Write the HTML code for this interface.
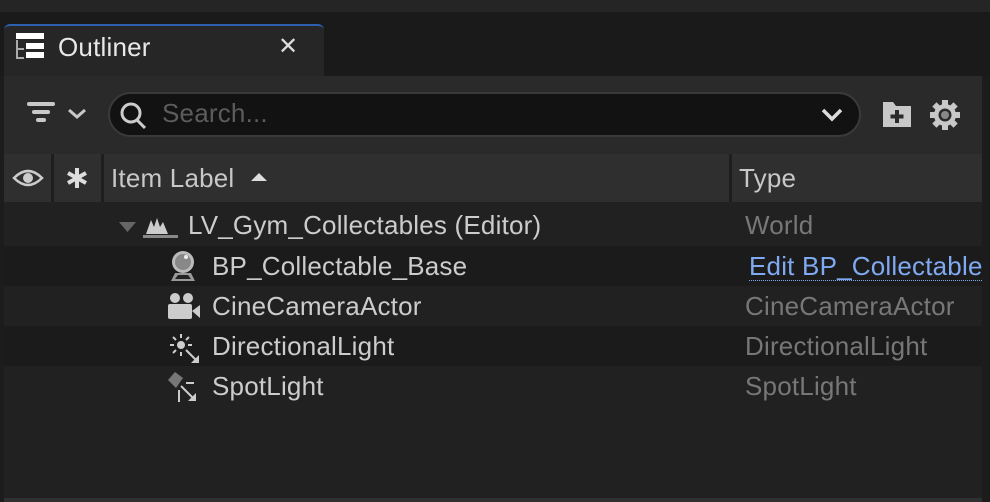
<!DOCTYPE html>
<html><head><style>
*{margin:0;padding:0;box-sizing:border-box}
body{width:990px;height:502px;background:#1c1c1c;font-family:"Liberation Sans",sans-serif;position:relative;overflow:hidden}
.a{position:absolute}
.t{font-size:26px;white-space:nowrap;position:absolute;letter-spacing:0.2px}
</style></head><body>
<div class="a" style="left:0;top:0;width:990px;height:12px;background:#252525"></div>
<div class="a" style="left:0;top:12px;width:990px;height:64px;background:#1a1a1a"></div>
<div class="a" style="left:4px;top:24px;width:320px;height:52px;background:#262626;border-radius:6px 6px 0 0;border-top:2px solid #2c5fae"></div>
<svg class="a" style="left:14px;top:32px" width="32" height="30"><rect x="2" y="1" width="28" height="6" fill="#fff"/><rect x="12" y="11" width="18" height="6" fill="#fff"/><rect x="12" y="20" width="18" height="6" fill="#fff"/><path d="M3 8V26H10M3 17H10" stroke="#aaa" stroke-width="2" fill="none"/></svg>
<div class="t" style="left:58px;top:32px;color:#e8e8e8">Outliner</div>
<div class="t" style="left:278px;top:32px;color:#ddd;font-size:24px">✕</div>
<div class="a" style="left:4px;top:76px;width:978px;height:78px;background:#2a2a2a"></div>
<svg class="a" style="left:26px;top:100px" width="64" height="28"><rect x="1" y="2" width="28" height="4" rx="2" fill="#c8c8c8"/><rect x="6" y="10" width="18" height="4" rx="2" fill="#c8c8c8"/><rect x="10" y="18" width="10" height="4" rx="2" fill="#c8c8c8"/><path d="M43 10L51 17L59 10" stroke="#c8c8c8" stroke-width="3" fill="none"/></svg>
<div class="a" style="left:108px;top:92px;width:753px;height:45px;background:#121212;border:2px solid #3a3a3a;border-radius:23px"></div>
<svg class="a" style="left:118px;top:100px" width="32" height="30"><circle cx="13" cy="13" r="9" stroke="#ccc" stroke-width="3" fill="none"/><path d="M19 20L27 28" stroke="#ccc" stroke-width="3"/></svg>
<div class="t" style="left:162px;top:98px;color:#5c5c5c">Search...</div>
<svg class="a" style="left:820px;top:106px" width="26" height="18"><path d="M3 4L12 13L21 4" stroke="#ddd" stroke-width="3.5" fill="none"/></svg>
<svg class="a" style="left:880px;top:99px" width="34" height="30"><path d="M3 3H13L16 7H31V28H3Z" fill="#c8c8c8"/><path d="M17 11V24M10.5 17.5H23.5" stroke="#2a2a2a" stroke-width="4"/></svg>
<svg class="a" style="left:928px;top:98px" width="34" height="34"><g fill="#c8c8c8" transform="translate(17 17)"><rect x="-3" y="-15" width="6" height="30"/><rect x="-3" y="-15" width="6" height="30" transform="rotate(45)"/><rect x="-3" y="-15" width="6" height="30" transform="rotate(90)"/><rect x="-3" y="-15" width="6" height="30" transform="rotate(135)"/><circle r="11"/></g><circle cx="17" cy="17" r="6.5" fill="#2a2a2a"/><circle cx="17" cy="17" r="4" fill="#888"/></svg>
<div class="a" style="left:4px;top:154px;width:978px;height:48px;background:#2f2f2f"></div>
<div class="a" style="left:51px;top:154px;width:3px;height:48px;background:#1e1e1e"></div>
<div class="a" style="left:101px;top:154px;width:3px;height:48px;background:#1e1e1e"></div>
<div class="a" style="left:729px;top:154px;width:3px;height:48px;background:#1e1e1e"></div>
<svg class="a" style="left:12px;top:166px" width="32" height="24"><path d="M2 12Q16 -2 30 12Q16 26 2 12Z" stroke="#ccc" stroke-width="2.5" fill="none"/><circle cx="16" cy="12" r="5" fill="#ccc"/></svg>
<svg class="a" style="left:66px;top:167px" width="22" height="22"><g stroke="#ddd" stroke-width="4"><path d="M11 1V21M2 6L20 16M2 16L20 6"/></g></svg>
<div class="t" style="left:111px;top:163px;color:#c8c8c8">Item Label</div>
<svg class="a" style="left:250px;top:172px" width="18" height="10"><path d="M1 9L9 1L17 9Z" fill="#ddd"/></svg>
<div class="t" style="left:739px;top:163px;color:#c8c8c8">Type</div>
<div class="a" style="left:4px;top:202px;width:978px;height:300px;background:#212121"></div>
<div class="a" style="left:4px;top:246px;width:978px;height:40px;background:#1b1b1b"></div>
<div class="a" style="left:4px;top:326px;width:978px;height:40px;background:#1b1b1b"></div>
<div class="a" style="left:4px;top:498px;width:978px;height:4px;background:#303030"></div>
<svg class="a" style="left:118px;top:214px" width="60" height="26"><path d="M1 8H18L9.5 18Z" fill="#666"/><path d="M28 20L33 6L36 13L39 4L42 13L45 8L50 20Z" fill="#ccc"/><rect x="25" y="21" width="51" height="3" fill="#888"/></svg>
<div class="t" style="left:188px;top:210px;color:#ccc">LV_Gym_Collectables (Editor)</div>
<div class="t" style="left:745px;top:210px;color:#777">World</div>
<svg class="a" style="left:166px;top:249px" width="34" height="34"><circle cx="17" cy="13" r="11" fill="#bbb"/><circle cx="17" cy="13" r="8" fill="#888"/><circle cx="20" cy="8" r="2" fill="#eee"/><path d="M5 32L9 24H25L29 32Z" fill="#999"/><path d="M9 30H25L22 26H12Z" fill="#222"/></svg>
<div class="t" style="left:212px;top:251px;color:#ccc">BP_Collectable_Base</div>
<div class="t" style="left:749px;top:251px;color:#7fa9f0">Edit BP_Collectable</div>
<div class="a" style="left:749px;top:280px;width:233px;border-top:1px dotted #7fa9f0"></div>
<svg class="a" style="left:166px;top:292px" width="36" height="28"><circle cx="9" cy="6" r="5" fill="#ccc"/><circle cx="22" cy="6" r="5" fill="#ccc"/><rect x="2" y="12" width="24" height="15" rx="2" fill="#ccc"/><path d="M26 19L34 13V26Z" fill="#ccc"/></svg>
<div class="t" style="left:212px;top:291px;color:#ccc">CineCameraActor</div>
<div class="t" style="left:745px;top:291px;color:#777">CineCameraActor</div>
<svg class="a" style="left:166px;top:330px" width="36" height="34"><circle cx="15" cy="15" r="4" fill="#ccc"/><g stroke="#ccc" stroke-width="2"><path d="M15 4V8M15 22V26M4 15H8M22 15H26M7 7L10 10M20 20L23 23M7 23L10 20M23 7L20 10"/></g><path d="M22 22L31 31" stroke="#ccc" stroke-width="2"/><path d="M33 33L33 25L25 33Z" fill="#ccc"/></svg>
<div class="t" style="left:212px;top:331px;color:#ccc">DirectionalLight</div>
<div class="t" style="left:745px;top:331px;color:#777">DirectionalLight</div>
<svg class="a" style="left:166px;top:370px" width="36" height="34"><path d="M2 10L9 2L17 8L10 18Z" fill="#777"/><path d="M20 13H28" stroke="#ccc" stroke-width="2"/><path d="M15 16L27 28M13 20V32" stroke="#ccc" stroke-width="2"/><path d="M30 31V23L22 31Z" fill="#ccc"/></svg>
<div class="t" style="left:212px;top:371px;color:#ccc">SpotLight</div>
<div class="t" style="left:745px;top:371px;color:#777">SpotLight</div>
</body></html>
